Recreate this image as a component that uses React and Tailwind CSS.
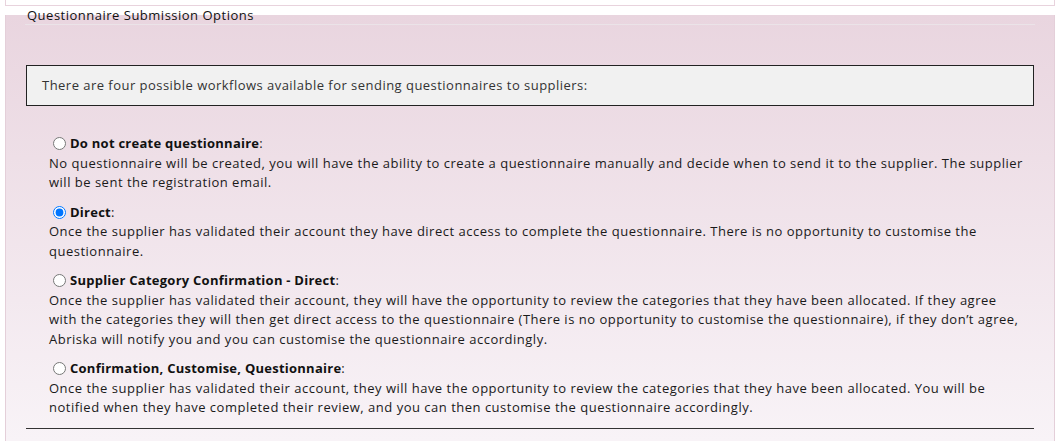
import { useState } from 'react';

const font = { fontFamily: '"Open Sans", "Liberation Sans", sans-serif' };

const options = [
	{
		id: 'none',
		label: 'Do not create questionnaire',
		lines: [
			'No questionnaire will be created, you will have the ability to create a questionnaire manually and decide when to send it to the supplier. The supplier',
			'will be sent the registration email.',
		],
	},
	{
		id: 'direct',
		label: 'Direct',
		lines: [
			'Once the supplier has validated their account they have direct access to complete the questionnaire. There is no opportunity to customise the',
			'questionnaire.',
		],
	},
	{
		id: 'category',
		label: 'Supplier Category Confirmation - Direct',
		lines: [
			'Once the supplier has validated their account, they will have the opportunity to review the categories that they have been allocated. If they agree',
			'with the categories they will then get direct access to the questionnaire (There is no opportunity to customise the questionnaire), if they don\u2019t agree,',
			'Abriska will notify you and you can customise the questionnaire accordingly.',
		],
	},
	{
		id: 'customise',
		label: 'Confirmation, Customise, Questionnaire',
		lines: [
			'Once the supplier has validated their account, they will have the opportunity to review the categories that they have been allocated. You will be',
			'notified when they have completed their review, and you can then customise the questionnaire accordingly.',
		],
	},
];

const Option = ( { option, checked, onSelect } ) => (
	<div className="mb-[10px] text-[13px] leading-[19.5px] text-[#1a1a1a] tracking-[0.5px]">
		<label className="flex items-center h-[19.5px] ml-[4px] cursor-pointer">
			<input
				type="radio"
				name="workflow"
				checked={ checked }
				onChange={ () => onSelect( option.id ) }
				className="m-0 mr-[4px] w-[13px] h-[13px] accent-[#0075ff]"
			/>
			<span className="font-bold text-[#111] tracking-[0.25px]">{ option.label }</span>
			<span>:</span>
		</label>
		{ option.lines.map( line => (
			<div key={ line } className="whitespace-nowrap">{ line }</div>
		) ) }
	</div>
);

export default function App() {
	const [ selected, setSelected ] = useState( 'direct' );

	return (
		<div className="w-[1060px] h-[441px] overflow-hidden bg-white" style={ font }>
			<div className="mx-[5px] h-[6px] border-x border-b border-[#e8d3dd] bg-white" />

			<div className="flow-root mx-[5px] mt-[9px] h-[500px] border-x border-[#e4cfd9] bg-gradient-to-b from-[#e9d5df] to-[#f8f3f7] from-0% to-[85%]">
				<div className="-mt-[9px] mx-[19px] h-[19px] border-b border-[#ebe3e8] text-[13px] leading-[18px] text-[#111] px-[2px] tracking-[0.5px]">
					Questionnaire Submission Options
				</div>

				<div className="mt-[40px] mx-[20px] h-[41px] border border-[#222] bg-[#f1f1f1] flex items-center pl-[15px] text-[13px] text-[#333] tracking-[0.47px]">
					There are four possible workflows available for sending questionnaires to suppliers:
				</div>

				<div className="mt-[28px] pl-[43px]">
					{ options.map( option => (
						<Option
							key={ option.id }
							option={ option }
							checked={ selected === option.id }
							onSelect={ setSelected }
						/>
					) ) }
				</div>

				<div className="mt-[8px] mx-[20px] border-t border-[#333]" />
			</div>
		</div>
	);
}
